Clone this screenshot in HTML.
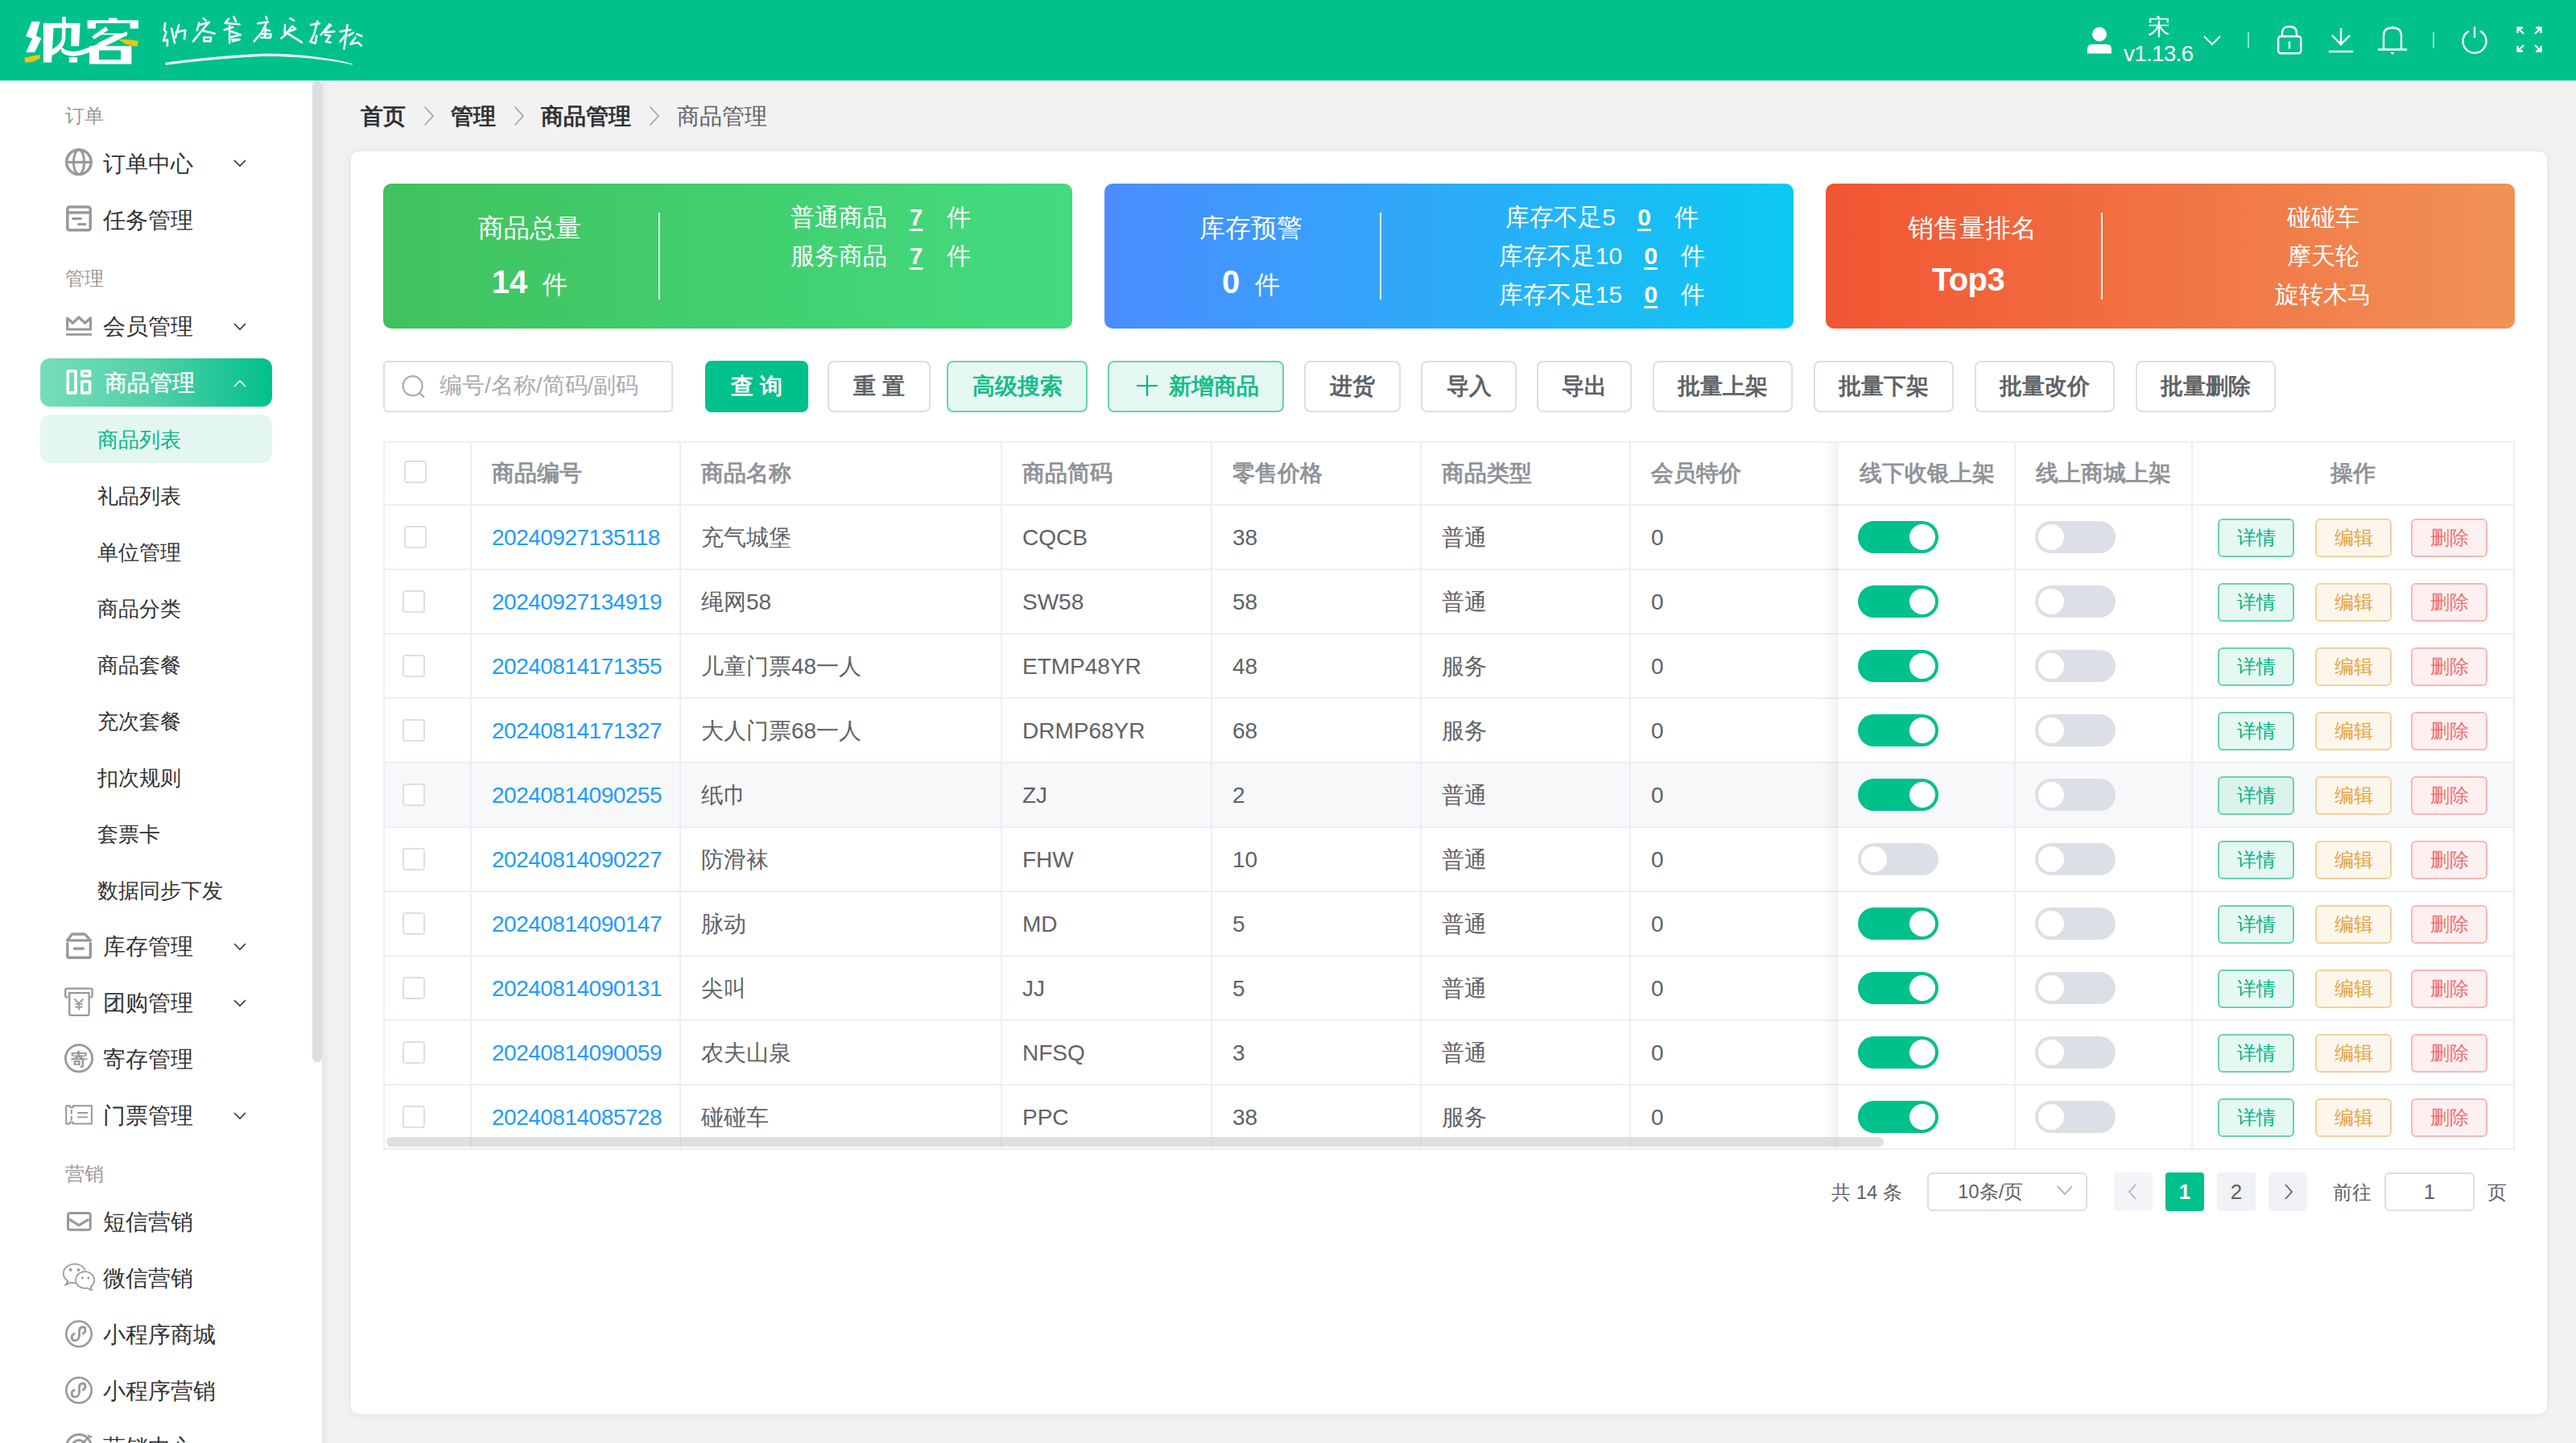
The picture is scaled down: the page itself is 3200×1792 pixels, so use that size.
<!DOCTYPE html><html><head><meta charset="utf-8"><title>商品管理</title><style>
*{box-sizing:border-box}
html,body{margin:0;padding:0}
body{width:3200px;height:1792px;overflow:hidden;position:relative;background:#f2f2f2;font-family:"Liberation Sans",sans-serif;color:#333}
@media (max-width:2000px){html{zoom:0.5}}
.a{position:absolute;white-space:nowrap}
.hdr{left:0;top:0;width:3200px;height:100px;background:#00c18b}
.sb{left:0;top:100px;width:400px;height:1692px;background:#fff;overflow:hidden}
.thumb{left:388px;top:100px;width:12px;height:1219px;background:#dddee1;border-radius:6px}
.sbshadow{left:400px;top:100px;width:10px;height:1692px;background:linear-gradient(90deg,rgba(0,0,0,0.05),rgba(0,0,0,0))}
.lbl{font-size:24px;color:#999;line-height:24px}
.mi{font-size:28px;color:#333;line-height:28px}
.si{font-size:26px;color:#333;line-height:26px}
.ico{stroke:#999;fill:none;stroke-width:3}
.card{left:436px;top:188px;width:2728px;height:1568px;background:#fff;border-radius:10px;box-shadow:0 0 12px rgba(0,0,0,0.07)}
.stat{top:228px;width:856px;height:180px;border-radius:10px;color:#fff}
.btn{top:448px;height:64px;border:2px solid #dcdfe6;border-radius:8px;background:#fff;font-size:28px;color:#606266;font-weight:bold;line-height:60px;text-align:center}
.tbl{left:476px;top:548px;width:2648px;height:880px;border:2px solid #ebeef5;overflow:hidden}
.hl{background:#ebeef5}
.th{font-size:28px;font-weight:bold;color:#909399;line-height:28px}
.td{font-size:28px;color:#606266;line-height:28px}
.lnk{color:#1f9bff;letter-spacing:-0.5px}
.cb{width:28px;height:28px;border:2px solid #dcdfe6;border-radius:4px;background:#fff}
.tg{width:100px;height:40px;border-radius:20px}
.tg.on{background:#00c08b}
.tg.off{background:#dcdfe6}
.knob{top:4px;width:32px;height:32px;border-radius:50%;background:#fff}
.ab{width:95px;height:48px;border:2px solid;border-radius:6px;font-size:24px;line-height:44px;text-align:center}
.ab.d{border-color:#66d4ae;background:#e6f8f2;color:#00b582}
.ab.e{border-color:#f3d19e;background:#fdf6ec;color:#e6a23c}
.ab.x{border-color:#fab6b6;background:#fef0f0;color:#f56c6c}
.pg{top:1456px;width:48px;height:48px;border-radius:4px;background:#f0f2f5;font-size:26px;line-height:48px;text-align:center;color:#606266}
</style></head><body>
<div class="a hdr"></div>
<svg class="a" style="left:25px;top:15px" width="155" height="70" viewBox="0 0 2576 1163"><g fill="#fff"><path d="M240 195 H410 L330 490 L440 540 L300 830 H120 L250 545 L120 500 Z"/><path d="M480 230 H1240 L1215 700 H1050 L1060 330 H690 L650 1040 H480 Z"/><path d="M870 95 H945 L935 560 Q900 780 650 900 L660 770 Q850 660 860 540 Z"/><path d="M1010 930 H1180 V1040 H1010 Z"/><path d="M850 720 Q1000 860 1250 790 Q1700 640 2200 400 L2215 470 Q1700 760 1280 880 Q980 960 850 820 Z"/><path d="M1390 170 H1830 V120 H2000 V170 H2440 V340 H2270 V230 H1560 V340 H1390 Z"/><path d="M1480 505 L1770 300 L1820 370 L1530 560 Z"/><path d="M1590 440 H2190 L2200 420 L2210 480 L1640 700 L1600 640 L1960 470 H1560 Z"/><path fill-rule="evenodd" d="M1430 700 H2300 V1070 H1430 Z M1630 790 V980 H2080 V790 Z"/></g><g fill="#ecc414"><path d="M90 945 Q260 900 420 880 L405 960 Q260 1050 100 1040 Z"/><path d="M2040 560 Q2250 560 2440 600 L2420 700 Q2250 730 2040 570 Z"/></g></svg>
<svg class="a" style="left:195px;top:15px;overflow:visible" width="135" height="70" viewBox="0 0 2576 1336"><g fill="none" stroke="#f2fbf7" stroke-width="50" stroke-linecap="round" stroke-linejoin="round"><path d="M195 260 L170 420 L220 480 L150 680 L250 660 L245 800"/><path d="M345 390 L420 730"/><path d="M520 300 L440 600"/><path d="M450 480 L670 430 L650 640"/><path d="M1100 150 L1160 200"/><path d="M1000 260 L950 430"/><path d="M1000 310 L1240 240 L1200 280"/><path d="M1210 260 L1080 420 L860 690"/><path d="M1080 440 L1370 510"/><path d="M1110 600 L1280 600 L1270 690 L1110 690 L1120 600"/><path d="M1700 160 L1620 260 L1960 290"/><path d="M1820 110 L1870 220"/><path d="M1600 420 L1800 360"/><path d="M1720 330 L1720 730"/><path d="M1760 460 L1980 540 L1760 590"/><path d="M1780 650 L1960 650 L1790 690"/></g></svg>
<svg class="a" style="left:320px;top:15px;overflow:visible" width="135" height="70" viewBox="0 0 2576 1336"><g fill="none" stroke="#f2fbf7" stroke-width="50" stroke-linecap="round" stroke-linejoin="round"><path d="M200 110 L220 170"/><path d="M10 270 L250 230"/><path d="M220 240 L100 480 L-80 690"/><path d="M150 420 L290 440"/><path d="M190 380 L170 600"/><path d="M90 520 L320 520 L300 610 L80 600"/><path d="M770 150 L860 200"/><path d="M650 300 L640 500 L900 400 L820 330 L680 520 L560 620"/><path d="M700 500 L1050 720"/><path d="M1260 300 L1470 270"/><path d="M1420 220 L1330 550 L1250 700 L1370 740 L1400 560"/><path d="M1500 540 L1700 290 L1740 310 L1560 480 L1820 460"/><path d="M1600 540 L1720 560 L1620 700 L1730 720"/><path d="M1960 460 L2200 420"/><path d="M2130 300 L2050 870"/><path d="M2100 520 L1960 700"/><path d="M2150 560 L2270 490"/><path d="M2350 520 L2470 570"/><path d="M2320 600 L2200 760 L2380 720 L2460 800"/></g></svg>
<svg class="a" style="left:0;top:0" width="460" height="100"><path d="M206 78.2 Q 262 70.5 330 67.2 Q 392 68 437.5 79.6 Q 392 70 330 69.2 Q 262 72.5 206 80.2 Z" fill="#eef9f4" stroke="#eef9f4" stroke-width="1.2" stroke-linejoin="round"/></svg>
<svg class="a" style="left:2590px;top:30px" width="36" height="40"><circle cx="18" cy="12.5" r="9" fill="#fff"/><path d="M3 36.5 V31 Q3 25 9 25 H27 Q33 25 33 31 V36.5 Z" fill="#fff"/></svg>
<div class="a" style="left:2668px;top:19px;font-size:28px;line-height:30px;color:#fff">宋</div>
<div class="a" style="left:2638px;top:52px;font-size:28px;line-height:30px;color:#fff;letter-spacing:-0.8px">v1.13.6</div>
<svg class="a" style="left:2734px;top:40px" width="28" height="20"><path d="M4 5 L14 15 L24 5" stroke="#fff" stroke-width="2" fill="none"/></svg>
<div class="a" style="left:2792px;top:40px;width:2px;height:20px;background:rgba(255,255,255,0.55)"></div>
<svg class="a" style="left:2826px;top:30px" width="36" height="40"><rect x="4.2" y="15.2" width="28" height="21" rx="3" stroke="#fff" stroke-width="2.4" fill="none"/><path d="M9 15 V11 Q9 3 18 3 Q27 3 27 11 V15" stroke="#fff" stroke-width="2.4" fill="none"/><path d="M18 21.5 V30.5" stroke="#fff" stroke-width="2.4"/></svg>
<svg class="a" style="left:2890px;top:30px" width="36" height="40"><path d="M18 5 V26" stroke="#fff" stroke-width="2.4"/><path d="M7 14 L18 25 L29 14" stroke="#fff" stroke-width="2.4" fill="none"/><path d="M4 34 H32" stroke="#fff" stroke-width="2.6" stroke-linecap="round"/></svg>
<svg class="a" style="left:2952px;top:30px" width="40" height="40"><path d="M9 31.5 V14 Q9 4.5 20 4.5 Q31 4.5 31 14 V31.5" stroke="#fff" stroke-width="2.4" fill="none"/><path d="M3 31.5 H37" stroke="#fff" stroke-width="2.6" stroke-linecap="round"/><path d="M17.5 35 H22.5 L20 38 Z" fill="#fff"/><circle cx="20" cy="4" r="1.8" fill="#fff"/></svg>
<div class="a" style="left:3022px;top:40px;width:2px;height:20px;background:rgba(255,255,255,0.55)"></div>
<svg class="a" style="left:3054px;top:30px" width="40" height="40"><path d="M13 8.5 A14.5 14.5 0 1 0 27 8.5" stroke="#fff" stroke-width="2.3" fill="none"/><path d="M20 3 V17" stroke="#fff" stroke-width="2.3"/></svg>
<svg class="a" style="left:3124px;top:30px" width="36" height="40"><g stroke="#fff" stroke-width="2.3" fill="none"><path d="M3.5 11 V4.5 H10"/><path d="M4 5 L11 12"/><path d="M26 4.5 H32.5 V11"/><path d="M32 5 L25 12"/><path d="M3.5 27 V33.5 H10"/><path d="M4 33 L11 26"/><path d="M26 33.5 H32.5 V27"/><path d="M32 33 L25 26"/></g></svg>
<div class="a sb"></div>
<div class="a sbshadow"></div>
<div class="a thumb"></div>
<div class="a lbl" style="left:81px;top:132px">订单</div>
<div class="a mi" style="left:128px;top:190px">订单中心</div>
<svg class="a" style="left:290px;top:197px" width="16" height="11"><path d="M1 2 L8 9 L15 2" stroke="#333" stroke-width="1.6" fill="none"/></svg>
<div class="a mi" style="left:128px;top:260px">任务管理</div>
<div class="a lbl" style="left:81px;top:334px">管理</div>
<div class="a mi" style="left:128px;top:392px">会员管理</div>
<svg class="a" style="left:290px;top:400px" width="16" height="11"><path d="M1 2 L8 9 L15 2" stroke="#333" stroke-width="1.6" fill="none"/></svg>
<div class="a" style="left:50px;top:445px;width:288px;height:60px;border-radius:12px;background:linear-gradient(90deg,#77ddbb,#4fd0a6 50%,#00c08b)"></div>
<div class="a mi" style="left:130px;top:462px;color:#fff;-webkit-text-stroke:0.4px #fff">商品管理</div>
<svg class="a" style="left:290px;top:471px" width="16" height="11"><path d="M1 9 L8 2 L15 9" stroke="#fff" stroke-width="1.6" fill="none"/></svg>
<div class="a" style="left:50px;top:515px;width:288px;height:60px;border-radius:12px;background:#e3f7f0"></div>
<div class="a si" style="left:121px;top:533px;color:#00b984">商品列表</div>
<div class="a si" style="left:121px;top:603px;color:#333">礼品列表</div>
<div class="a si" style="left:121px;top:673px;color:#333">单位管理</div>
<div class="a si" style="left:121px;top:743px;color:#333">商品分类</div>
<div class="a si" style="left:121px;top:813px;color:#333">商品套餐</div>
<div class="a si" style="left:121px;top:883px;color:#333">充次套餐</div>
<div class="a si" style="left:121px;top:953px;color:#333">扣次规则</div>
<div class="a si" style="left:121px;top:1023px;color:#333">套票卡</div>
<div class="a si" style="left:121px;top:1093px;color:#333">数据同步下发</div>
<div class="a mi" style="left:128px;top:1162px">库存管理</div>
<svg class="a" style="left:290px;top:1170px" width="16" height="11"><path d="M1 2 L8 9 L15 2" stroke="#333" stroke-width="1.6" fill="none"/></svg>
<div class="a mi" style="left:128px;top:1232px">团购管理</div>
<svg class="a" style="left:290px;top:1240px" width="16" height="11"><path d="M1 2 L8 9 L15 2" stroke="#333" stroke-width="1.6" fill="none"/></svg>
<div class="a mi" style="left:128px;top:1302px">寄存管理</div>
<div class="a mi" style="left:128px;top:1372px">门票管理</div>
<svg class="a" style="left:290px;top:1380px" width="16" height="11"><path d="M1 2 L8 9 L15 2" stroke="#333" stroke-width="1.6" fill="none"/></svg>
<div class="a lbl" style="left:81px;top:1446px">营销</div>
<div class="a mi" style="left:128px;top:1504px">短信营销</div>
<div class="a mi" style="left:128px;top:1574px">微信营销</div>
<div class="a mi" style="left:128px;top:1644px">小程序商城</div>
<div class="a mi" style="left:128px;top:1714px">小程序营销</div>
<div class="a mi" style="left:128px;top:1784px">营销中心</div>
<svg class="a" style="left:290px;top:1792px" width="16" height="11"><path d="M1 2 L8 9 L15 2" stroke="#333" stroke-width="1.6" fill="none"/></svg>
<svg class="a" style="left:70px;top:100px" width="60" height="1692" viewBox="70 100 60 1692"><g fill="none" stroke="#999"><circle cx="97.9" cy="201.3" r="15.3" stroke-width="3.4"/><ellipse cx="98" cy="201.3" rx="6.6" ry="15.3" stroke-width="3"/><path d="M82.5 201.4 H113.3" stroke-width="3.2"/><rect x="83.8" y="257" width="28.4" height="28.8" rx="2.5" stroke-width="3.5"/><path d="M84 264 H112" stroke-width="3.5"/><path d="M90.4 271.4 H100.4 M97.6 278.5 H105.8" stroke-width="3" stroke-linecap="round"/><path d="M83.6 409 V395 L90.5 401.2 L98 394 L105.5 401.2 L112.4 395 V409 Z" stroke-width="3.2" stroke-linejoin="round"/><path d="M82 415.4 H114" stroke-width="2.8"/><g stroke="#fff" stroke-width="3.6"><rect x="84.3" y="460.8" width="9.7" height="27.1" rx="1"/><rect x="101.8" y="460.8" width="9.8" height="5.9" rx="1"/><rect x="101.8" y="473.7" width="9.8" height="14.2" rx="1"/></g><path d="M89.5 1160 H105.3 L112.5 1167.9 H83.5 Z" stroke-width="3.3" stroke-linejoin="round"/><path d="M83.8 1171.5 V1187.5 Q83.8 1189.2 85.5 1189.2 H110.5 Q112.3 1189.2 112.3 1187.5 V1171.5" stroke-width="3.4" stroke-linecap="round"/><path d="M92.5 1178 H103.3" stroke-width="3.4" stroke-linecap="round"/><path d="M84.5 1238.3 H82.5 Q81.2 1238.3 81.2 1237 V1229.8 Q81.2 1227.6 83.4 1227.6 H112.6 Q114.6 1227.6 114.6 1229.8 V1237 Q114.6 1238.3 113.3 1238.3 H111.4" stroke-width="2.3"/><path d="M86.2 1233.2 V1259 Q86.2 1260.8 88 1260.8 H108.8 Q110.6 1260.8 110.6 1259 V1233.2 Z" stroke-width="2.3"/><path d="M92.5 1240.5 L98 1246 L103.5 1240.5 M98 1246 V1254.5 M93.5 1246.8 H102.5 M93.5 1250.5 H102.5" stroke-width="1.8"/><circle cx="98" cy="1314.3" r="16.6" stroke-width="2.8"/><text x="98.2" y="1322.5" font-size="21" font-weight="bold" text-anchor="middle" fill="#999" stroke="none">寄</text><path d="M82.2 1373.3 H86.6 A2.2 2.2 0 0 0 91 1373.3 H113.9 V1395.4 H91 A2.2 2.2 0 0 0 86.6 1395.4 H82.2 Z" stroke-width="2"/><path d="M88.8 1378 V1383.5 M88.8 1386 V1391.5" stroke-width="2"/><path d="M96.2 1382 H109 M96.2 1387.3 H109" stroke-width="1.8"/><rect x="84.5" y="1506.6" width="27.7" height="20.7" rx="2.5" stroke-width="3"/><path d="M85.8 1514.1 L98.1 1521.6 L110.3 1514.1" stroke-width="3" stroke-linejoin="round"/><path d="M106 1577.5 A14 11.8 0 1 0 84.5 1591 L81.5 1595.5 L88 1592.6 Q91.5 1593.5 94.6 1593.2" stroke-width="1.7"/><path d="M108.5 1599.5 L114 1602.4 L112.5 1597.8 A11.6 10.3 0 1 0 108.5 1599.5 Z" stroke-width="1.7" stroke-linejoin="round"/><g fill="#999" stroke="none"><circle cx="87.5" cy="1577" r="1.9"/><circle cx="97.4" cy="1577" r="1.9"/><circle cx="102.4" cy="1587" r="1.5"/><circle cx="109.9" cy="1587" r="1.5"/></g><circle cx="98" cy="1656.5" r="15.7" stroke-width="2.6"/><path d="M92.2 1656.3 C87.5 1658.5 88.5 1664.8 93 1664.8 C96.5 1664.8 98.5 1662.0 98.5 1658.5 V1653.0 C98.5 1649.5 100.5 1648.0 103 1648.0 C106.5 1648.0 107.5 1653.5 103.3 1656.0" stroke-width="2.8" stroke-linecap="round"/><circle cx="98" cy="1726.5" r="15.7" stroke-width="2.6"/><path d="M92.2 1726.3 C87.5 1728.5 88.5 1734.8 93 1734.8 C96.5 1734.8 98.5 1732.0 98.5 1728.5 V1723.0 C98.5 1719.5 100.5 1718.0 103 1718.0 C106.5 1718.0 107.5 1723.5 103.3 1726.0" stroke-width="2.8" stroke-linecap="round"/><circle cx="98" cy="1797" r="15.5" stroke-width="3"/><circle cx="98" cy="1797" r="8.5" stroke-width="3"/><path d="M99 1796 L110 1785" stroke-width="2.6"/><path d="M108 1781 L111 1786 L115.5 1784 Z" fill="#999" stroke="none"/></g></svg>
<div class="a" style="left:448px;top:130px;font-size:28px;line-height:30px;font-weight:bold;color:#303133">首页</div>
<svg class="a" style="left:526px;top:131px" width="14" height="26"><path d="M1.5 1.5 L12 13 L1.5 24.5" stroke="#a8a8a8" stroke-width="1.8" fill="none"/></svg>
<div class="a" style="left:560px;top:130px;font-size:28px;line-height:30px;font-weight:bold;color:#303133">管理</div>
<svg class="a" style="left:638px;top:131px" width="14" height="26"><path d="M1.5 1.5 L12 13 L1.5 24.5" stroke="#a8a8a8" stroke-width="1.8" fill="none"/></svg>
<div class="a" style="left:672px;top:130px;font-size:28px;line-height:30px;font-weight:bold;color:#303133">商品管理</div>
<svg class="a" style="left:806px;top:131px" width="14" height="26"><path d="M1.5 1.5 L12 13 L1.5 24.5" stroke="#a8a8a8" stroke-width="1.8" fill="none"/></svg>
<div class="a" style="left:841px;top:130px;font-size:28px;line-height:30px;color:#606266">商品管理</div>
<div class="a card"></div>
<div class="a stat" style="left:476px;background:linear-gradient(90deg,#40c25d,#43db80)"></div>
<div class="a" style="left:508px;top:266px;width:300px;text-align:center;font-size:32px;line-height:34px;color:#fff">商品总量</div>
<div class="a" style="left:508px;top:328px;width:300px;text-align:center;font-size:40px;line-height:44px;color:#fff"><b style="font-size:40px">14</b><span style="font-size:31px;margin-left:19px">件</span></div>
<div class="a" style="left:818px;top:264px;width:2px;height:108px;background:rgba(255,255,255,0.9)"></div>
<div class="a" style="left:844px;top:254px;width:500px;text-align:center;font-size:30px;line-height:32px;color:#fff">普通商品 <span style="display:inline-block;margin:0 29px 0 19px;font-weight:bold;text-decoration:underline;text-underline-offset:4px">7</span>件</div>
<div class="a" style="left:844px;top:302px;width:500px;text-align:center;font-size:30px;line-height:32px;color:#fff">服务商品 <span style="display:inline-block;margin:0 29px 0 19px;font-weight:bold;text-decoration:underline;text-underline-offset:4px">7</span>件</div>
<div class="a stat" style="left:1372px;background:linear-gradient(90deg,#4c8cff,#0ccaf2)"></div>
<div class="a" style="left:1404px;top:266px;width:300px;text-align:center;font-size:32px;line-height:34px;color:#fff">库存预警</div>
<div class="a" style="left:1404px;top:328px;width:300px;text-align:center;font-size:40px;line-height:44px;color:#fff"><b style="font-size:40px">0</b><span style="font-size:31px;margin-left:19px">件</span></div>
<div class="a" style="left:1714px;top:264px;width:2px;height:108px;background:rgba(255,255,255,0.9)"></div>
<div class="a" style="left:1740px;top:254px;width:500px;text-align:center;font-size:30px;line-height:32px;color:#fff">库存不足5 <span style="display:inline-block;margin:0 29px 0 19px;font-weight:bold;text-decoration:underline;text-underline-offset:4px">0</span>件</div>
<div class="a" style="left:1740px;top:302px;width:500px;text-align:center;font-size:30px;line-height:32px;color:#fff">库存不足10 <span style="display:inline-block;margin:0 29px 0 19px;font-weight:bold;text-decoration:underline;text-underline-offset:4px">0</span>件</div>
<div class="a" style="left:1740px;top:350px;width:500px;text-align:center;font-size:30px;line-height:32px;color:#fff">库存不足15 <span style="display:inline-block;margin:0 29px 0 19px;font-weight:bold;text-decoration:underline;text-underline-offset:4px">0</span>件</div>
<div class="a stat" style="left:2268px;background:linear-gradient(90deg,#f15533,#f19256)"></div>
<div class="a" style="left:2300px;top:266px;width:300px;text-align:center;font-size:32px;line-height:34px;color:#fff">销售量排名</div>
<div class="a" style="left:2300px;top:328px;width:300px;text-align:center;font-size:40px;line-height:44px;color:#fff"><b style="position:relative;left:-5px;top:-3px;letter-spacing:-0.5px">Top3</b></div>
<div class="a" style="left:2610px;top:264px;width:2px;height:108px;background:rgba(255,255,255,0.9)"></div>
<div class="a" style="left:2636px;top:254px;width:500px;text-align:center;font-size:30px;line-height:32px;color:#fff">碰碰车</div>
<div class="a" style="left:2636px;top:302px;width:500px;text-align:center;font-size:30px;line-height:32px;color:#fff">摩天轮</div>
<div class="a" style="left:2636px;top:350px;width:500px;text-align:center;font-size:30px;line-height:32px;color:#fff">旋转木马</div>
<div class="a" style="left:476px;top:448px;width:360px;height:64px;border:2px solid #dcdfe6;border-radius:6px;background:#fff"></div>
<svg class="a" style="left:498px;top:465px" width="32" height="30"><circle cx="14.6" cy="14.2" r="12" stroke="#a8abb2" stroke-width="2.2" fill="none"/><path d="M23.5 23 L29 28.5" stroke="#a8abb2" stroke-width="2.2"/></svg>
<div class="a" style="left:546px;top:464px;font-size:28px;line-height:30px;color:#a8abb2">编号/名称/简码/副码</div>
<div class="a btn" style="left:876px;width:128px;background:#00c08b;border-color:#00c08b;color:#fff">查 询</div>
<div class="a btn" style="left:1028px;width:128px">重 置</div>
<div class="a btn" style="left:1176px;width:175px;background:#e6f8f2;border-color:#66d3ad;color:#13be8b">高级搜索</div>
<div class="a btn" style="left:1376px;width:219px;background:#e6f8f2;border-color:#66d3ad;color:#13be8b"><svg width="28" height="28" style="position:absolute;left:33px;top:15px"><path d="M14 1 V27 M1 14 H27" stroke="#00b482" stroke-width="2.2"/></svg><span style="position:absolute;left:74px;top:0">新增商品</span></div>
<div class="a btn" style="left:1620px;width:120px">进货</div>
<div class="a btn" style="left:1765px;width:119px">导入</div>
<div class="a btn" style="left:1909px;width:118px">导出</div>
<div class="a btn" style="left:2053px;width:174px">批量上架</div>
<div class="a btn" style="left:2253px;width:174px">批量下架</div>
<div class="a btn" style="left:2453px;width:174px">批量改价</div>
<div class="a btn" style="left:2653px;width:174px">批量删除</div>
<div class="a" style="left:476px;top:548px;width:2648px;height:880px;border:2px solid #ebeef5;background:#fff"></div>
<div class="a" style="left:478px;top:948px;width:2644px;height:78px;background:#f7f8fa"></div>
<div class="a hl" style="left:476px;top:626px;width:2648px;height:2px"></div>
<div class="a hl" style="left:476px;top:706px;width:2648px;height:2px"></div>
<div class="a hl" style="left:476px;top:786px;width:2648px;height:2px"></div>
<div class="a hl" style="left:476px;top:866px;width:2648px;height:2px"></div>
<div class="a hl" style="left:476px;top:946px;width:2648px;height:2px"></div>
<div class="a hl" style="left:476px;top:1026px;width:2648px;height:2px"></div>
<div class="a hl" style="left:476px;top:1106px;width:2648px;height:2px"></div>
<div class="a hl" style="left:476px;top:1186px;width:2648px;height:2px"></div>
<div class="a hl" style="left:476px;top:1266px;width:2648px;height:2px"></div>
<div class="a hl" style="left:476px;top:1346px;width:2648px;height:2px"></div>
<div class="a hl" style="left:584px;top:548px;width:2px;height:880px"></div>
<div class="a hl" style="left:844px;top:548px;width:2px;height:880px"></div>
<div class="a hl" style="left:1243px;top:548px;width:2px;height:880px"></div>
<div class="a hl" style="left:1504px;top:548px;width:2px;height:880px"></div>
<div class="a hl" style="left:1764px;top:548px;width:2px;height:880px"></div>
<div class="a hl" style="left:2024px;top:548px;width:2px;height:880px"></div>
<div class="a hl" style="left:2502px;top:548px;width:2px;height:880px"></div>
<div class="a hl" style="left:2722px;top:548px;width:2px;height:880px"></div>
<div class="a" style="left:2264px;top:550px;width:20px;height:876px;background:linear-gradient(90deg,rgba(0,0,0,0),rgba(0,0,0,0.05))"></div>
<div class="a cb" style="left:502px;top:572px"></div>
<div class="a th" style="left:611px;top:574px">商品编号</div>
<div class="a th" style="left:871px;top:574px">商品名称</div>
<div class="a th" style="left:1270px;top:574px">商品简码</div>
<div class="a th" style="left:1531px;top:574px">零售价格</div>
<div class="a th" style="left:1791px;top:574px">商品类型</div>
<div class="a th" style="left:2051px;top:574px">会员特价</div>
<div class="a th" style="left:2310px;top:574px">线下收银上架</div>
<div class="a th" style="left:2529px;top:574px">线上商城上架</div>
<div class="a th" style="left:2723px;top:574px;width:400px;text-align:center">操作</div>
<div class="a cb" style="left:502px;top:653px"></div>
<div class="a td lnk" style="left:611px;top:654px">20240927135118</div>
<div class="a td" style="left:871px;top:654px">充气城堡</div>
<div class="a td" style="left:1270px;top:654px">CQCB</div>
<div class="a td" style="left:1531px;top:654px">38</div>
<div class="a td" style="left:1791px;top:654px">普通</div>
<div class="a td" style="left:2051px;top:654px">0</div>
<div class="a tg on" style="left:2308px;top:647px"><div class="a knob" style="left:64px"></div></div>
<div class="a tg off" style="left:2528px;top:647px"><div class="a knob" style="left:4px"></div></div>
<div class="a ab d" style="left:2755px;top:644px">详情</div>
<div class="a ab e" style="left:2876px;top:644px">编辑</div>
<div class="a ab x" style="left:2995px;top:644px">删除</div>
<div class="a cb" style="left:500px;top:733px"></div>
<div class="a td lnk" style="left:611px;top:734px">20240927134919</div>
<div class="a td" style="left:871px;top:734px">绳网58</div>
<div class="a td" style="left:1270px;top:734px">SW58</div>
<div class="a td" style="left:1531px;top:734px">58</div>
<div class="a td" style="left:1791px;top:734px">普通</div>
<div class="a td" style="left:2051px;top:734px">0</div>
<div class="a tg on" style="left:2308px;top:727px"><div class="a knob" style="left:64px"></div></div>
<div class="a tg off" style="left:2528px;top:727px"><div class="a knob" style="left:4px"></div></div>
<div class="a ab d" style="left:2755px;top:724px">详情</div>
<div class="a ab e" style="left:2876px;top:724px">编辑</div>
<div class="a ab x" style="left:2995px;top:724px">删除</div>
<div class="a cb" style="left:500px;top:813px"></div>
<div class="a td lnk" style="left:611px;top:814px">20240814171355</div>
<div class="a td" style="left:871px;top:814px">儿童门票48一人</div>
<div class="a td" style="left:1270px;top:814px">ETMP48YR</div>
<div class="a td" style="left:1531px;top:814px">48</div>
<div class="a td" style="left:1791px;top:814px">服务</div>
<div class="a td" style="left:2051px;top:814px">0</div>
<div class="a tg on" style="left:2308px;top:807px"><div class="a knob" style="left:64px"></div></div>
<div class="a tg off" style="left:2528px;top:807px"><div class="a knob" style="left:4px"></div></div>
<div class="a ab d" style="left:2755px;top:804px">详情</div>
<div class="a ab e" style="left:2876px;top:804px">编辑</div>
<div class="a ab x" style="left:2995px;top:804px">删除</div>
<div class="a cb" style="left:500px;top:893px"></div>
<div class="a td lnk" style="left:611px;top:894px">20240814171327</div>
<div class="a td" style="left:871px;top:894px">大人门票68一人</div>
<div class="a td" style="left:1270px;top:894px">DRMP68YR</div>
<div class="a td" style="left:1531px;top:894px">68</div>
<div class="a td" style="left:1791px;top:894px">服务</div>
<div class="a td" style="left:2051px;top:894px">0</div>
<div class="a tg on" style="left:2308px;top:887px"><div class="a knob" style="left:64px"></div></div>
<div class="a tg off" style="left:2528px;top:887px"><div class="a knob" style="left:4px"></div></div>
<div class="a ab d" style="left:2755px;top:884px">详情</div>
<div class="a ab e" style="left:2876px;top:884px">编辑</div>
<div class="a ab x" style="left:2995px;top:884px">删除</div>
<div class="a cb" style="left:500px;top:973px"></div>
<div class="a td lnk" style="left:611px;top:974px">20240814090255</div>
<div class="a td" style="left:871px;top:974px">纸巾</div>
<div class="a td" style="left:1270px;top:974px">ZJ</div>
<div class="a td" style="left:1531px;top:974px">2</div>
<div class="a td" style="left:1791px;top:974px">普通</div>
<div class="a td" style="left:2051px;top:974px">0</div>
<div class="a tg on" style="left:2308px;top:967px"><div class="a knob" style="left:64px"></div></div>
<div class="a tg off" style="left:2528px;top:967px"><div class="a knob" style="left:4px"></div></div>
<div class="a ab d" style="left:2755px;top:964px;background:#dcf3ec">详情</div>
<div class="a ab e" style="left:2876px;top:964px">编辑</div>
<div class="a ab x" style="left:2995px;top:964px">删除</div>
<div class="a cb" style="left:500px;top:1053px"></div>
<div class="a td lnk" style="left:611px;top:1054px">20240814090227</div>
<div class="a td" style="left:871px;top:1054px">防滑袜</div>
<div class="a td" style="left:1270px;top:1054px">FHW</div>
<div class="a td" style="left:1531px;top:1054px">10</div>
<div class="a td" style="left:1791px;top:1054px">普通</div>
<div class="a td" style="left:2051px;top:1054px">0</div>
<div class="a tg off" style="left:2308px;top:1047px"><div class="a knob" style="left:4px"></div></div>
<div class="a tg off" style="left:2528px;top:1047px"><div class="a knob" style="left:4px"></div></div>
<div class="a ab d" style="left:2755px;top:1044px">详情</div>
<div class="a ab e" style="left:2876px;top:1044px">编辑</div>
<div class="a ab x" style="left:2995px;top:1044px">删除</div>
<div class="a cb" style="left:500px;top:1133px"></div>
<div class="a td lnk" style="left:611px;top:1134px">20240814090147</div>
<div class="a td" style="left:871px;top:1134px">脉动</div>
<div class="a td" style="left:1270px;top:1134px">MD</div>
<div class="a td" style="left:1531px;top:1134px">5</div>
<div class="a td" style="left:1791px;top:1134px">普通</div>
<div class="a td" style="left:2051px;top:1134px">0</div>
<div class="a tg on" style="left:2308px;top:1127px"><div class="a knob" style="left:64px"></div></div>
<div class="a tg off" style="left:2528px;top:1127px"><div class="a knob" style="left:4px"></div></div>
<div class="a ab d" style="left:2755px;top:1124px">详情</div>
<div class="a ab e" style="left:2876px;top:1124px">编辑</div>
<div class="a ab x" style="left:2995px;top:1124px">删除</div>
<div class="a cb" style="left:500px;top:1213px"></div>
<div class="a td lnk" style="left:611px;top:1214px">20240814090131</div>
<div class="a td" style="left:871px;top:1214px">尖叫</div>
<div class="a td" style="left:1270px;top:1214px">JJ</div>
<div class="a td" style="left:1531px;top:1214px">5</div>
<div class="a td" style="left:1791px;top:1214px">普通</div>
<div class="a td" style="left:2051px;top:1214px">0</div>
<div class="a tg on" style="left:2308px;top:1207px"><div class="a knob" style="left:64px"></div></div>
<div class="a tg off" style="left:2528px;top:1207px"><div class="a knob" style="left:4px"></div></div>
<div class="a ab d" style="left:2755px;top:1204px">详情</div>
<div class="a ab e" style="left:2876px;top:1204px">编辑</div>
<div class="a ab x" style="left:2995px;top:1204px">删除</div>
<div class="a cb" style="left:500px;top:1293px"></div>
<div class="a td lnk" style="left:611px;top:1294px">20240814090059</div>
<div class="a td" style="left:871px;top:1294px">农夫山泉</div>
<div class="a td" style="left:1270px;top:1294px">NFSQ</div>
<div class="a td" style="left:1531px;top:1294px">3</div>
<div class="a td" style="left:1791px;top:1294px">普通</div>
<div class="a td" style="left:2051px;top:1294px">0</div>
<div class="a tg on" style="left:2308px;top:1287px"><div class="a knob" style="left:64px"></div></div>
<div class="a tg off" style="left:2528px;top:1287px"><div class="a knob" style="left:4px"></div></div>
<div class="a ab d" style="left:2755px;top:1284px">详情</div>
<div class="a ab e" style="left:2876px;top:1284px">编辑</div>
<div class="a ab x" style="left:2995px;top:1284px">删除</div>
<div class="a cb" style="left:500px;top:1373px"></div>
<div class="a td lnk" style="left:611px;top:1374px">20240814085728</div>
<div class="a td" style="left:871px;top:1374px">碰碰车</div>
<div class="a td" style="left:1270px;top:1374px">PPC</div>
<div class="a td" style="left:1531px;top:1374px">38</div>
<div class="a td" style="left:1791px;top:1374px">服务</div>
<div class="a td" style="left:2051px;top:1374px">0</div>
<div class="a tg on" style="left:2308px;top:1367px"><div class="a knob" style="left:64px"></div></div>
<div class="a tg off" style="left:2528px;top:1367px"><div class="a knob" style="left:4px"></div></div>
<div class="a ab d" style="left:2755px;top:1364px">详情</div>
<div class="a ab e" style="left:2876px;top:1364px">编辑</div>
<div class="a ab x" style="left:2995px;top:1364px">删除</div>
<div class="a" style="left:480px;top:1412px;width:1860px;height:12px;border-radius:6px;background:rgba(200,201,204,0.6)"></div>
<div class="a" style="left:2275px;top:1467px;font-size:24px;line-height:28px;color:#606266">共 14 条</div>
<div class="a" style="left:2394px;top:1456px;width:199px;height:48px;border:2px solid #dcdfe6;border-radius:6px;background:#fff"></div>
<div class="a" style="left:2432px;top:1466px;font-size:24px;line-height:28px;color:#606266">10条/页</div>
<svg class="a" style="left:2554px;top:1471px" width="24" height="16"><path d="M2 2 L11 12 L20 2" stroke="#a8abb2" stroke-width="1.8" fill="none"/></svg>
<div class="a pg" style="left:2626px;background:#f4f5f8"><svg width="48" height="48" style="position:absolute;left:0;top:0"><path d="M27 15 L19 24 L27 33" stroke="#b0b3b8" stroke-width="1.8" fill="none"/></svg></div>
<div class="a pg" style="left:2690px;background:#00c08b;color:#fff;font-weight:bold">1</div>
<div class="a pg" style="left:2754px">2</div>
<div class="a pg" style="left:2818px"><svg width="48" height="48" style="position:absolute;left:0;top:0"><path d="M21 15 L29 24 L21 33" stroke="#606266" stroke-width="1.8" fill="none"/></svg></div>
<div class="a" style="left:2898px;top:1467px;font-size:24px;line-height:28px;color:#606266">前往</div>
<div class="a" style="left:2962px;top:1456px;width:112px;height:48px;border:2px solid #dcdfe6;border-radius:6px;background:#fff;font-size:26px;line-height:44px;text-align:center;color:#606266">1</div>
<div class="a" style="left:3090px;top:1467px;font-size:24px;line-height:28px;color:#606266">页</div>
</body></html>
